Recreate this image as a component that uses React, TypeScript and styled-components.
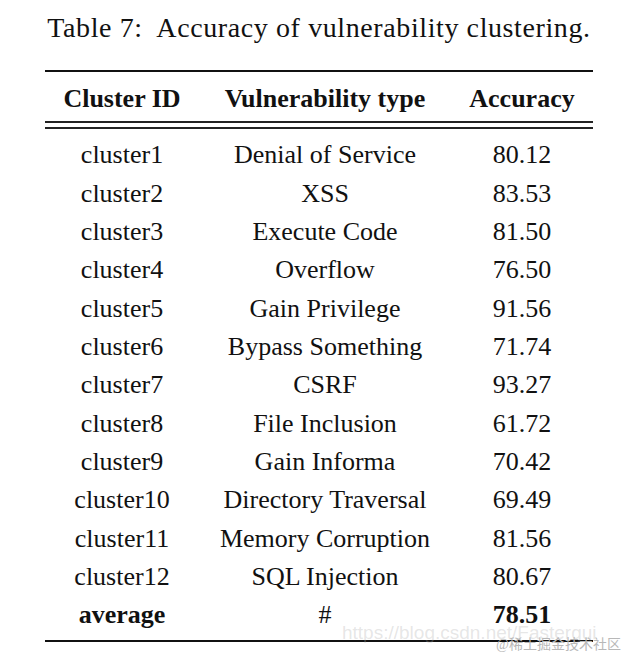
import React from "react";
import styled, { createGlobalStyle } from "styled-components";

type Row = {
  id: string;
  type: string;
  accuracy: string;
  bold?: boolean;
};

const rows: Row[] = [
  { id: "cluster1", type: "Denial of Service", accuracy: "80.12" },
  { id: "cluster2", type: "XSS", accuracy: "83.53" },
  { id: "cluster3", type: "Execute Code", accuracy: "81.50" },
  { id: "cluster4", type: "Overflow", accuracy: "76.50" },
  { id: "cluster5", type: "Gain Privilege", accuracy: "91.56" },
  { id: "cluster6", type: "Bypass Something", accuracy: "71.74" },
  { id: "cluster7", type: "CSRF", accuracy: "93.27" },
  { id: "cluster8", type: "File Inclusion", accuracy: "61.72" },
  { id: "cluster9", type: "Gain Informa", accuracy: "70.42" },
  { id: "cluster10", type: "Directory Traversal", accuracy: "69.49" },
  { id: "cluster11", type: "Memory Corruption", accuracy: "81.56" },
  { id: "cluster12", type: "SQL Injection", accuracy: "80.67" },
  { id: "average", type: "#", accuracy: "78.51", bold: true },
];

const App: React.FC = () => {
  return (
    <Page>
      <GlobalStyle />
      <Figure>
        <Caption>Table 7:&nbsp; Accuracy of vulnerability clustering.</Caption>
        <TopRule />
        <Grid>
          <HeadCell>Cluster ID</HeadCell>
          <HeadCell>Vulnerability type</HeadCell>
          <HeadCell>Accuracy</HeadCell>
        </Grid>
        <DoubleRule />
        <Body>
          {rows.map((r) => (
            <Grid key={r.id}>
              <Cell bold={r.bold}>{r.id}</Cell>
              <Cell>{r.type}</Cell>
              <Cell bold={r.bold}>{r.accuracy}</Cell>
            </Grid>
          ))}
        </Body>
        <BottomRule />
      </Figure>
      <UrlMark>https://blog.csdn.net/Fastergui</UrlMark>
      <SiteMark>@稀土掘金技术社区</SiteMark>
    </Page>
  );
};

const GlobalStyle = createGlobalStyle`
  html, body {
    margin: 0;
    padding: 0;
    background: #ffffff;
  }
`;

const Page = styled.div`
  position: relative;
  width: 625px;
  height: 657px;
  overflow: hidden;
  background: #ffffff;
  color: #111111;
  font-family: "Times New Roman", "Liberation Serif", "DejaVu Serif", serif;
`;

const Figure = styled.div`
  width: 548px;
  margin-left: 45px;
  padding-top: 12px;
  display: flex;
  flex-direction: column;
`;

const Caption = styled.div`
  font-size: 28px;
  line-height: 32px;
  letter-spacing: 0.6px;
  text-align: center;
  white-space: nowrap;
  margin-bottom: 26px;
`;

const TopRule = styled.div`
  height: 2px;
  background: #111111;
`;

const DoubleRule = styled.div`
  height: 4px;
  border-top: 2px solid #222222;
  border-bottom: 2px solid #222222;
`;

const BottomRule = styled.div`
  height: 2px;
  background: #111111;
`;

const Grid = styled.div`
  display: grid;
  grid-template-columns: 154px 252px 142px;
  text-align: center;
  font-size: 26px;
  line-height: 38.33px;
`;

const HeadCell = styled.div`
  font-weight: bold;
  padding: 8px 0 3px;
`;

const Body = styled.div`
  padding: 7px 0 5px;
`;

const Cell = styled.div<{ bold?: boolean }>`
  font-weight: ${(p) => (p.bold ? "bold" : "normal")};
  white-space: nowrap;
`;

const UrlMark = styled.div`
  position: absolute;
  left: 342px;
  top: 623px;
  font-family: "Liberation Sans", Arial, sans-serif;
  font-size: 19px;
  line-height: 20px;
  color: rgba(170, 170, 170, 0.3);
  white-space: nowrap;
`;

const SiteMark = styled.div`
  position: absolute;
  right: 4px;
  top: 636px;
  font-family: "Liberation Serif", "Noto Sans CJK SC", serif;
  font-size: 14px;
  line-height: 18px;
  color: #b8b8b8;
  white-space: nowrap;
`;

export default App;
